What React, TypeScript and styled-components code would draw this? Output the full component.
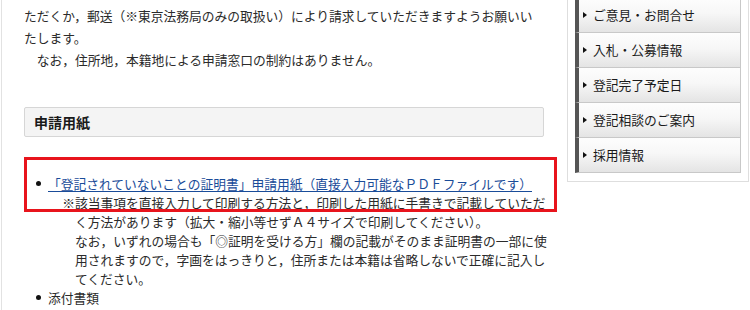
import React from "react";
import styled, { createGlobalStyle } from "styled-components";

const Global = createGlobalStyle`
  html, body { margin: 0; padding: 0; background: #fff; }
  body {
    font-family: "Noto Sans CJK JP", "Noto Sans", sans-serif;
    color: #2b2b2b;
    overflow: hidden;
  }
`;

const Page = styled.div`
  display: flex;
  align-items: flex-start;
  width: 750px;
  height: 310px;
  overflow: hidden;
  padding-left: 1px;
  box-sizing: border-box;
`;

const Main = styled.main`
  width: 556px;
  flex: none;
  border-left: 1px solid #e2e2e2;
  padding-left: 22px;
  box-sizing: border-box;
  font-size: 12.75px;
  height: 310px;
`;

const Para = styled.p`
  margin: 0;
  padding-top: 5px;
  margin-right: 13px;
  line-height: 22px;
`;

const Indented = styled.span`
  display: block;
  text-indent: 1em;
`;

const Heading = styled.h3`
  margin: 36px 13px 0 0;
  height: 30px;
  box-sizing: border-box;
  border: 1px solid #d6d6d6;
  border-radius: 2px;
  background: #f4f4f4;
  padding-left: 9px;
  display: flex;
  align-items: center;
  font-size: 14px;
  font-weight: bold;
  color: #1a1a1a;
`;

const ListSection = styled.section`
  position: relative;
  margin-top: 37px;
`;

const List = styled.ul`
  list-style: none;
  margin: 0;
  padding: 0;
  line-height: 19px;
`;

const Item = styled.li`
  position: relative;
  padding-left: 24px;
  &::before {
    content: "";
    position: absolute;
    left: 12px;
    top: 7px;
    width: 5px;
    height: 5px;
    border-radius: 50%;
    background: #111;
  }
`;

const Link = styled.a`
  color: #1a4c99;
  text-decoration: underline;
  text-underline-offset: 2px;
`;

const Note = styled.div`
  padding-left: 27px;
  text-indent: -1em;
`;

const NoteLine = styled.span`
  display: block;
  text-indent: 0;
`;

const Highlight = styled.div`
  position: absolute;
  left: 0;
  right: 0;
  top: -17px;
  height: 55px;
  border: 3px solid #e8141c;
  box-sizing: border-box;
  pointer-events: none;
`;

const Side = styled.aside`
  width: 182px;
  flex: none;
  margin-left: 10px;
  margin-top: -4px;
  border: 1px solid #dedede;
  padding: 0 7px 8px 7px;
  box-sizing: border-box;
  background: #fff;
`;

const Menu = styled.ul`
  list-style: none;
  margin: 0;
  padding: 0;
  border-top: 1px solid #c8c8c8;
`;

const MenuItem = styled.li`
  height: 35px;
  box-sizing: border-box;
  border-left: 4px solid #555;
  border-right: 1px solid #c8c8c8;
  border-bottom: 1px solid #c8c8c8;
  background: linear-gradient(#fdfdfd 0%, #f7f7f7 45%, #e4e4e4 100%);
  display: flex;
  align-items: center;
  padding-left: 4px;
  padding-bottom: 1px;
  font-size: 12.75px;
  color: #1a1a1a;
`;

const Arrow = styled.span`
  width: 0;
  height: 0;
  border-top: 3px solid transparent;
  border-bottom: 3px solid transparent;
  border-left: 4px solid #111;
  margin-right: 6px;
`;

const menu = [
  "ご意見・お問合せ",
  "入札・公募情報",
  "登記完了予定日",
  "登記相談のご案内",
  "採用情報",
];

export default function App() {
  return (
    <>
      <Global />
      <Page>
        <Main>
          <Para>
            ただくか，郵送（※東京法務局のみの取扱い）により請求していただきますようお願いいたします。
            <Indented>なお，住所地，本籍地による申請窓口の制約はありません。</Indented>
          </Para>
          <Heading>申請用紙</Heading>
          <ListSection>
            <List>
              <Item>
                <Link href="#">
                  「登記されていないことの証明書」申請用紙（直接入力可能なＰＤＦファイルです）
                </Link>
                <Note>
                  ※該当事項を直接入力して印刷する方法と，印刷した用紙に手書きで記載していただく方法があります（拡大・縮小等せずＡ４サイズで印刷してください）。
                  <NoteLine>
                    なお，いずれの場合も「◎証明を受ける方」欄の記載がそのまま証明書の一部に使用されますので，字画をはっきりと，住所または本籍は省略しないで正確に記入してください。
                  </NoteLine>
                </Note>
              </Item>
              <Item>添付書類</Item>
            </List>
            <Highlight />
          </ListSection>
        </Main>
        <Side>
          <Menu>
            {menu.map((m) => (
              <MenuItem key={m}>
                <Arrow />
                {m}
              </MenuItem>
            ))}
          </Menu>
        </Side>
      </Page>
    </>
  );
}
